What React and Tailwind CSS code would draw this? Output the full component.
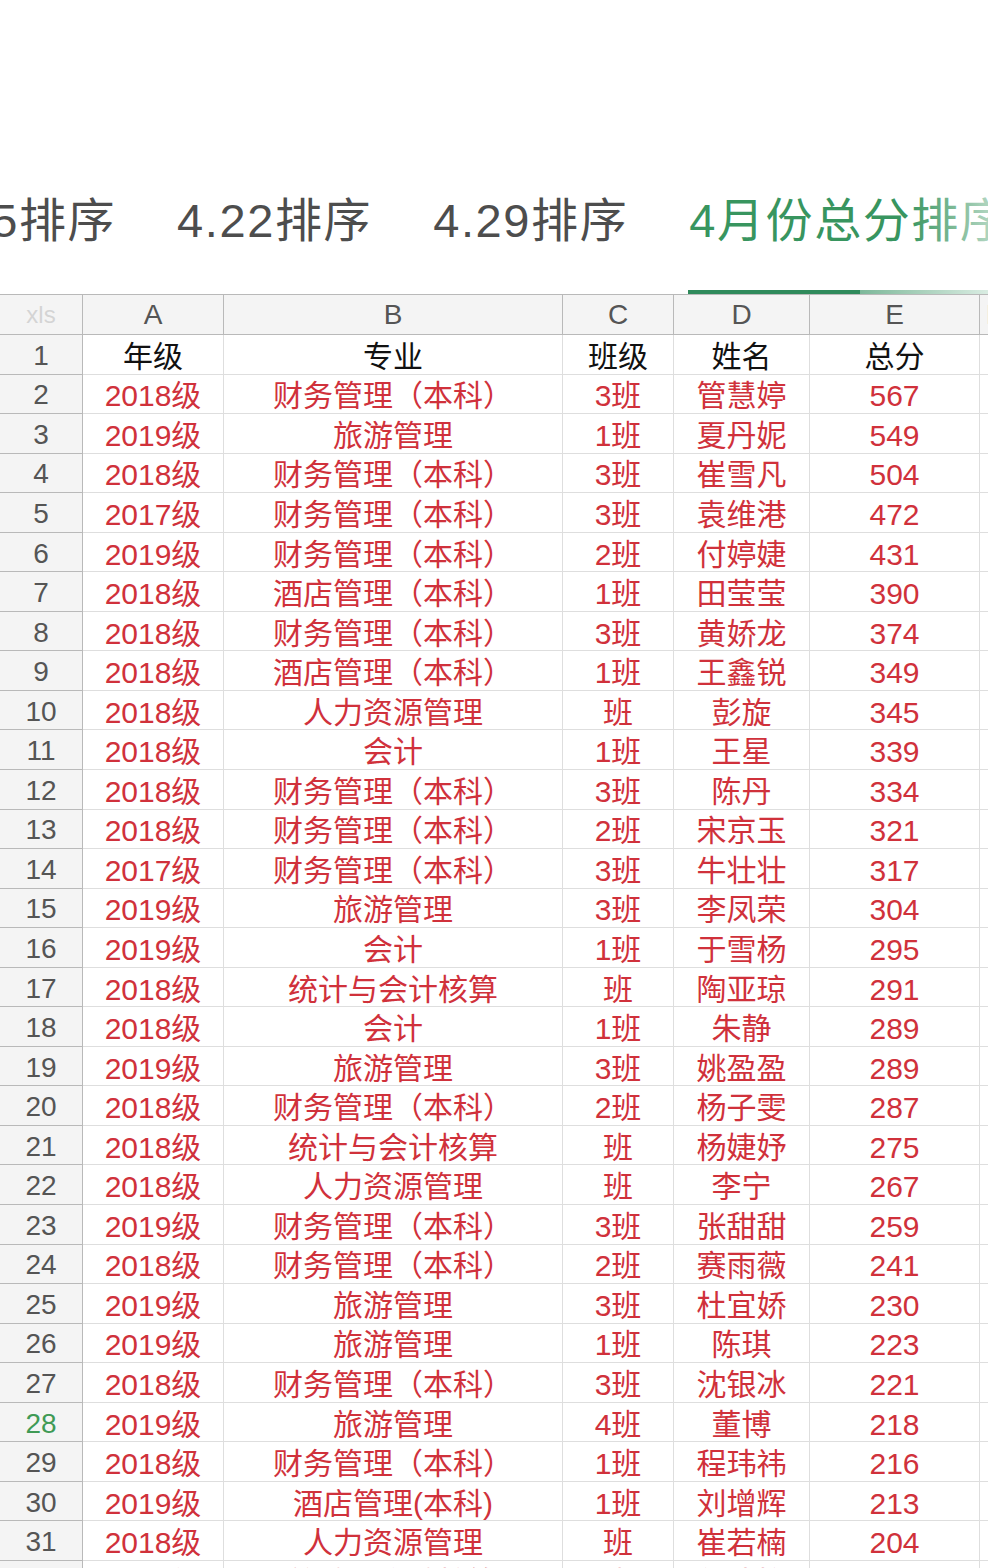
const rows = [
  ['2018级', '财务管理（本科）', '3班', '管慧婷', '567'],
  ['2019级', '旅游管理', '1班', '夏丹妮', '549'],
  ['2018级', '财务管理（本科）', '3班', '崔雪凡', '504'],
  ['2017级', '财务管理（本科）', '3班', '袁维港', '472'],
  ['2019级', '财务管理（本科）', '2班', '付婷婕', '431'],
  ['2018级', '酒店管理（本科）', '1班', '田莹莹', '390'],
  ['2018级', '财务管理（本科）', '3班', '黄娇龙', '374'],
  ['2018级', '酒店管理（本科）', '1班', '王鑫锐', '349'],
  ['2018级', '人力资源管理', '班', '彭旋', '345'],
  ['2018级', '会计', '1班', '王星', '339'],
  ['2018级', '财务管理（本科）', '3班', '陈丹', '334'],
  ['2018级', '财务管理（本科）', '2班', '宋京玉', '321'],
  ['2017级', '财务管理（本科）', '3班', '牛壮壮', '317'],
  ['2019级', '旅游管理', '3班', '李凤荣', '304'],
  ['2019级', '会计', '1班', '于雪杨', '295'],
  ['2018级', '统计与会计核算', '班', '陶亚琼', '291'],
  ['2018级', '会计', '1班', '朱静', '289'],
  ['2019级', '旅游管理', '3班', '姚盈盈', '289'],
  ['2018级', '财务管理（本科）', '2班', '杨子雯', '287'],
  ['2018级', '统计与会计核算', '班', '杨婕妤', '275'],
  ['2018级', '人力资源管理', '班', '李宁', '267'],
  ['2019级', '财务管理（本科）', '3班', '张甜甜', '259'],
  ['2018级', '财务管理（本科）', '2班', '赛雨薇', '241'],
  ['2019级', '旅游管理', '3班', '杜宜娇', '230'],
  ['2019级', '旅游管理', '1班', '陈琪', '223'],
  ['2018级', '财务管理（本科）', '3班', '沈银冰', '221'],
  ['2019级', '旅游管理', '4班', '董博', '218'],
  ['2018级', '财务管理（本科）', '1班', '程玮祎', '216'],
  ['2019级', '酒店管理(本科)', '1班', '刘增辉', '213'],
  ['2018级', '人力资源管理', '班', '崔若楠', '204'],
  ['2018级', '统计与会计核算', '班', '郭佳怡', '198'],
];

const font = { fontFamily: '"Liberation Sans", "Noto Sans CJK SC", sans-serif' };

const HeadCell = ({ children }) => (
  <div className="flex items-center justify-center bg-[#f4f4f4] border-r border-b border-[#b9b9b9] text-[28px] text-[#555]">
    {children}
  </div>
);

const NumCell = ({ n }) => (
  <div
    className={`flex items-center justify-center pt-[3px] bg-[#f4f4f4] border-r border-b border-[#b9b9b9] text-[28px] ${
      n === 28 ? 'text-[#3f9a55]' : 'text-[#555]'
    }`}
  >
    {n}
  </div>
);

const Cell = ({ children, black }) => (
  <div
    className={`flex items-center justify-center pt-[4px] border-r border-b border-[#dedede] text-[30px] whitespace-nowrap overflow-hidden ${
      black ? 'text-[#111]' : 'text-[#d0313b]'
    }`}
  >
    {children}
  </div>
);

export default function App() {
  return (
    <div className="w-[988px] h-[1568px] overflow-hidden bg-white" style={font}>
      {/* Sheet tabs */}
      <div className="relative pt-[190px] h-[290px] overflow-hidden">
        <div className="flex items-center h-[62px] gap-[61px] ml-[-79px] whitespace-nowrap text-[47px] tracking-[1.6px] text-[#4d4d4d]">
          <span>4.15排序</span>
          <span>4.22排序</span>
          <span>4.29排序</span>
          <span className="text-[#38955f]">4月份总分排序</span>
        </div>
        <div className="absolute right-0 top-[180px] h-[90px] w-[80px] bg-gradient-to-l from-white/60 to-white/0" />
      </div>
      <div className="flex h-[4px]">
        <div className="w-[688px]" />
        <div className="w-[172px] bg-[#2f8a5b]" />
        <div className="flex-1 bg-gradient-to-r from-[#7db89a] to-[#d9ece2]" />
      </div>

      {/* Grid */}
      <div className="grid grid-cols-[83px_141px_339px_111px_136px_170px_30px] grid-rows-[40px] auto-rows-[39.55px] border-t border-[#b9b9b9]">
        <div className="flex items-center justify-center bg-[#f4f4f4] border-r border-b border-[#b9b9b9] text-[24px] text-[#d4d4d4]">
          xls
        </div>
        <HeadCell>A</HeadCell>
        <HeadCell>B</HeadCell>
        <HeadCell>C</HeadCell>
        <HeadCell>D</HeadCell>
        <HeadCell>E</HeadCell>
        <HeadCell>F</HeadCell>

        <NumCell n={1} />
        <Cell black>年级</Cell>
        <Cell black>专业</Cell>
        <Cell black>班级</Cell>
        <Cell black>姓名</Cell>
        <Cell black>总分</Cell>
        <Cell black />

        {rows.map((r, i) => (
          <div key={i} className="contents">
            <NumCell n={i + 2} />
            {r.map((v, j) => (
              <Cell key={j}>{v}</Cell>
            ))}
            <Cell />
          </div>
        ))}
      </div>
    </div>
  );
}
